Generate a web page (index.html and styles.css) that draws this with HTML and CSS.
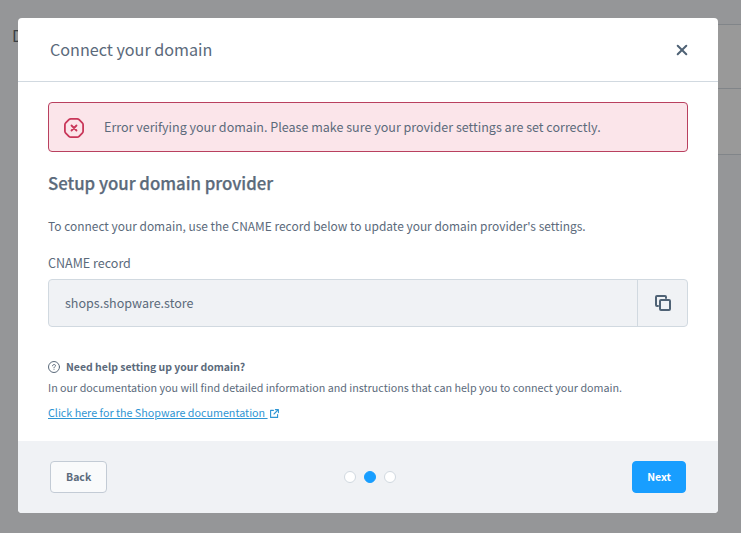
FILE: index.html
```html
<!DOCTYPE html>
<html lang="en">
<head>
    <meta charset="UTF-8">
    <meta name="viewport" content="width=device-width, initial-scale=1.0">
    <title>Connect your domain</title>
    <link rel="stylesheet" href="styles.css">
</head>
<body>
    <main class="page">
        <h1 class="page-title">D</h1>
        <div class="page-card">
            <div class="page-row"></div>
            <div class="page-row"></div>
        </div>
    </main>

    <div class="overlay">
        <div class="modal" role="dialog" aria-labelledby="modalTitle">
            <header class="modal-header">
                <h2 class="modal-title" id="modalTitle">Connect your domain</h2>
                <button class="modal-close" type="button" aria-label="Close">
                    <svg width="12" height="12" viewBox="0 0 12 12" fill="none" stroke="currentColor" stroke-width="2" stroke-linecap="round">
                        <path d="M1.7 1.7l8.6 8.6M10.3 1.7l-8.6 8.6"/>
                    </svg>
                </button>
            </header>

            <div class="modal-body">
                <div class="alert">
                    <svg class="alert-icon" width="20" height="20" viewBox="0 0 20 20" fill="none" stroke="currentColor" stroke-width="1.8" stroke-linecap="round" stroke-linejoin="round">
                        <path d="M6.8 .9h6.4q1.1 0 1.9.8l3.2 3.2q.8.8.8 1.9v6.4q0 1.1-.8 1.9l-3.2 3.2q-.8.8-1.9.8H6.8q-1.1 0-1.9-.8l-3.2-3.2q-.8-.8-.8-1.9V6.8q0-1.1.8-1.9l3.2-3.2q.8-.8 1.9-.8z"/>
                        <path d="M7.5 7.5l5 5M12.5 7.5l-5 5"/>
                    </svg>
                    <p class="alert-text">Error verifying your domain. Please make sure your provider settings are set correctly.</p>
                </div>

                <h3 class="section-title">Setup your domain provider</h3>
                <p class="section-text">To connect your domain, use the CNAME record below to update your domain provider's settings.</p>

                <label class="field-label" for="cname">CNAME record</label>
                <div class="field">
                    <input class="field-input" id="cname" type="text" value="shops.shopware.store" readonly>
                    <button class="field-copy" type="button" aria-label="Copy">
                        <svg width="16" height="16" viewBox="0 0 16 16" fill="none" stroke="currentColor" stroke-width="2" stroke-linecap="round" stroke-linejoin="round">
                            <rect x="5" y="5" width="10" height="10" rx="1"/>
                            <path d="M3 11H2a1 1 0 0 1-1-1V2a1 1 0 0 1 1-1h8a1 1 0 0 1 1 1v1"/>
                        </svg>
                    </button>
                </div>

                <div class="help">
                    <h4 class="help-title">
                        <svg width="12" height="12" viewBox="0 0 12 12" fill="none" stroke="currentColor" stroke-linecap="round">
                            <circle cx="6" cy="6" r="5.5"/>
                            <path d="M4.5 4.8C4.5 3 7.5 3 7.5 4.7C7.5 5.7 6 5.6 6 6.7M6 8.2v.1"/>
                        </svg>
                        Need help setting up your domain?
                    </h4>
                    <p class="help-text">In our documentation you will find detailed information and instructions that can help you to connect your domain.</p>
                    <a class="help-link" href="#"><span class="help-link-text">Click here for the Shopware documentation&nbsp;</span><svg class="help-link-icon" width="9" height="9" viewBox="0 0 9 9" fill="none" stroke="currentColor" stroke-width="1.1" stroke-linecap="round" stroke-linejoin="round">
                            <path d="M3.4 1.4H.6v7h7V5.6M5.4.6h3v3M8.3.7L4 5"/>
                        </svg></a>
                </div>
            </div>

            <footer class="modal-footer">
                <button class="btn" type="button">Back</button>
                <div class="steps">
                    <span class="step"></span>
                    <span class="step step-active"></span>
                    <span class="step"></span>
                </div>
                <button class="btn btn-primary" type="button">Next</button>
            </footer>
        </div>
    </div>
</body>
</html>
```

FILE: styles.css
```css
:root {
    --text: #5b6a7b;
    --icon: #4f6275;
    --border: #d1d9e0;
    --primary: #189eff;
    --error: #c9375a;
    --gray: #f0f2f5;
}

* {
    box-sizing: border-box;
}

body {
    margin: 0;
    height: 533px;
    overflow: hidden;
    background: #959698;
    color: var(--text);
    font-family: "Noto Sans CJK SC", "Open Sans", sans-serif;
}

h1, h2, h3, h4, p {
    margin: 0;
    font-weight: 400;
}

button, input {
    font-family: inherit;
    color: inherit;
}

svg {
    display: block;
    flex: none;
}

.page {
    display: flex;
    justify-content: space-between;
    padding: 24px 0 0 12px;
}

.page-title {
    color: #3b3f44;
    font-size: 16px;
    line-height: 22px;
}

.page-card {
    width: 80px;
    background: #999;
    border-top: 1px solid #818589;
}

.page-row {
    height: 64px;
    border-bottom: 1px solid #818589;
}

.page-row:last-child {
    height: 66px;
}

/* Modal */
.overlay {
    position: absolute;
    inset: 0;
    padding: 18px;
}

.modal {
    width: 700px;
    height: 495px;
    display: flex;
    flex-direction: column;
    background: #fff;
    border-radius: 4px;
    overflow: hidden;
}

.modal-header {
    height: 64px;
    display: flex;
    align-items: center;
    justify-content: space-between;
    padding: 0 30px 0 32px;
    border-bottom: 1px solid var(--border);
}

.modal-title {
    padding-bottom: 2px;
    font-size: 16.15px;
    line-height: 24px;
}

.modal-close {
    padding: 0;
    border: none;
    background: none;
    color: var(--icon);
    cursor: pointer;
}

.modal-body {
    flex: 1;
    padding: 20px 30px 0;
}

.alert {
    height: 50px;
    display: flex;
    align-items: center;
    gap: 20px;
    padding: 0 15px;
    background: #fbe5ea;
    border: 1px solid #b9405f;
    border-radius: 4px;
}

.alert-icon {
    margin-top: 2px;
    color: var(--error);
}

.alert-text {
    font-size: 12.54px;
    line-height: 20px;
}

.section-title {
    margin-top: 19px;
    font-size: 16.8px;
    font-weight: 500;
    line-height: 24px;
    -webkit-text-stroke: 0.25px currentColor;
}

.section-text {
    margin-top: 21px;
    font-size: 11.95px;
    line-height: 20px;
}

.field-label {
    display: block;
    margin: 17px 0 6px;
    font-size: 12.54px;
    line-height: 20px;
}

.field {
    height: 48px;
    display: flex;
    background: var(--gray);
    border: 1px solid var(--border);
    border-radius: 4px;
}

.field-input {
    flex: 1;
    padding: 0 16px 2px;
    border: none;
    background: none;
    font-size: 12.54px;
}

.field-copy {
    width: 50px;
    display: flex;
    align-items: center;
    justify-content: center;
    padding: 0;
    border: none;
    border-left: 1px solid var(--border);
    background: none;
    color: var(--icon);
    cursor: pointer;
}

.help {
    margin-top: 30px;
}

.help-title {
    display: flex;
    align-items: center;
    gap: 6px;
    font-size: 10.48px;
    font-weight: 700;
    line-height: 20px;
}

.help-text {
    margin-top: 1px;
    font-size: 10.74px;
    line-height: 20px;
}

.help-link {
    display: inline-flex;
    align-items: center;
    gap: 2px;
    margin-top: 5px;
    color: #2e95d3;
    font-size: 10.74px;
    line-height: 20px;
    text-decoration: none;
}

.help-link-text {
    text-decoration: underline;
}

.help-link-icon {
    margin-top: 1px;
}

.modal-footer {
    height: 72px;
    display: flex;
    align-items: center;
    justify-content: space-between;
    padding: 0 32px;
    background: var(--gray);
}

.btn {
    height: 32px;
    padding: 0 15px 2px;
    border: 1px solid #c3cbd5;
    border-radius: 4px;
    background: #f9fafb;
    font-size: 10.5px;
    font-weight: 700;
    cursor: pointer;
}

.btn-primary {
    padding: 0 14px 2px;
    border-color: var(--primary);
    background: var(--primary);
    color: #fff;
}

.steps {
    display: flex;
    gap: 8px;
}

.step {
    width: 12px;
    height: 12px;
    border: 1px solid var(--border);
    border-radius: 50%;
    background: #fff;
}

.step-active {
    border-color: var(--primary);
    background: var(--primary);
}
```
